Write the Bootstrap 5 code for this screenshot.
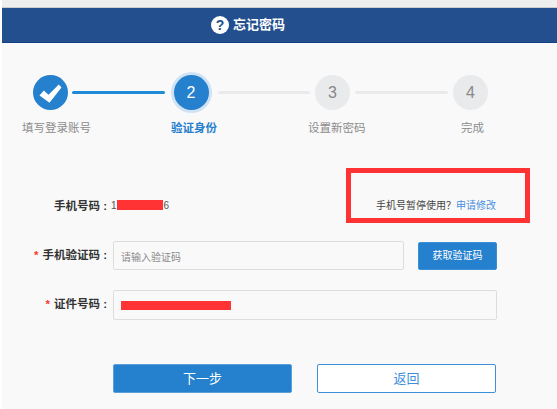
<!DOCTYPE html>
<html lang="zh"><head><meta charset="utf-8"><title>忘记密码</title>
<link href="https://cdn.jsdelivr.net/npm/bootstrap@5.3.0/dist/css/bootstrap.min.css" rel="stylesheet">
<style>
html,body{height:409px;overflow:hidden;background:#fff}
body{font-family:"Liberation Sans","Noto Sans CJK SC",sans-serif;font-size:11px;color:#333}
.pg{margin-left:2px;height:409px;background:#f9f9f9}
.topstrip{height:8px;background:#eeeeee;border-bottom:1px solid #ccc}
.hdr{height:35px;background:#234f8f;border-bottom:1px solid #123f80;color:#fff;font-size:13px;font-weight:700;padding-left:209px;gap:4px}
.qmark{width:18px;height:18px;border-radius:50%;background:#fff;color:#234f8f;font-size:14px;font-weight:700;line-height:18px;text-align:center}
.track{padding:32px 0 0 31px;height:67px}
.node{width:35px;height:35px;border-radius:50%;background:#e9eaec;color:#888;font-size:16px;flex:none}
.node.on{background:#2580cd;color:#fff}
.node.cur{box-shadow:0 0 0 3px #cfe3f5}
.seg{height:3px;width:92.5px;background:#e9eaec;border-radius:2px;flex:none}
.seg.on{background:#1f8ad6}
.g1{margin:0 9px 0 4px}.g2{margin:0 5px 0 9px}.g3{margin:0 5.5px 0 5px}
.lbls{height:20px;margin-top:8px;color:#8c8c8c;font-size:11.5px;line-height:20px}
.l1{margin-left:20px;width:149px}.l2{width:137px;color:#2580cd;font-weight:700}.l3{width:153px}
.frm{padding-top:30px}
.r1{height:55px}
.flbl{width:105px;flex:none;text-align:right;font-weight:700;font-size:11.5px;color:#333}
.flbl i{color:#f33;font-style:normal;margin-right:4px}
.phone{width:344px;flex:none;font-size:10px;color:#555;line-height:14px;padding:31px 0 0}
.phone .flbl{margin-right:4px}
.redact{display:inline-block;background:#f33;flex:none}
.rd1{width:46px;height:10px;margin:1px 1px 0 0}
.rd2{width:110px;height:9px;margin-top:1px}
.flagbox{width:184px;height:55px;border:5px solid #f33;flex:none;font-size:10px;color:#444;text-align:right;padding:26px 29px 0 0;line-height:14px;white-space:nowrap}
.flagbox a{color:#4a8fe0;text-decoration:none}
.r2{margin-top:18px;height:29px}
.r3{margin-top:20px;height:30px}
.inp{height:100%;background:#f9f9f9;border:1px solid #ddd;border-radius:2px;margin-left:6px;padding:0 7px;font-size:10px;color:#8a8a8a;flex:none}
.w1{width:291px;padding-top:3px}.w2{width:384px}
.getc{width:79px;height:28px;margin-left:14px;background:#2580cd;border:1px solid #3a8fd8;color:#fff;font-size:10px;border-radius:2px;padding:0;flex:none}
.acts{margin-top:44px;padding-left:111px;gap:25px}
.bt{width:179px;height:29px;border-radius:2px;font-size:13px;padding:0;flex:none}
.bt1{background:#2580cd;border:1px solid #5a9fdc;color:#fff}
.bt2{background:#fff;border:1px solid #3d8edb;color:#3d8edb}
</style></head><body>
<div class="pg">
<div class="topstrip"></div>
<div class="hdr d-flex align-items-center"><span class="qmark">?</span><span>忘记密码</span></div>
<div class="track d-flex align-items-center">
 <div class="node on d-flex align-items-center justify-content-center"><svg width="23" height="20" viewBox="0 0 23 20"><path d="M0.5 12.5 L4.8 7.5 L9.5 11.8 L19.8 1.5 L22.5 4.5 L10.5 19.8 Z" fill="#fff"/></svg></div>
 <div class="seg on g1"></div>
 <div class="node on cur d-flex align-items-center justify-content-center">2</div>
 <div class="seg g2"></div>
 <div class="node d-flex align-items-center justify-content-center">3</div>
 <div class="seg g3"></div>
 <div class="node d-flex align-items-center justify-content-center">4</div>
</div>
<div class="lbls d-flex"><div class="l1">填写登录账号</div><div class="l2">验证身份</div><div class="l3">设置新密码</div><div>完成</div></div>
<div class="frm">
 <div class="r1 d-flex">
  <div class="phone d-flex align-items-start"><div class="flbl">手机号码 :</div><span>1</span><span class="redact rd1"></span><span>6</span></div>
  <div class="flagbox">手机号暂停使用？<a href="#">申请修改</a></div>
 </div>
 <div class="r2 d-flex align-items-center"><div class="flbl"><i>*</i>手机验证码 :</div><div class="inp w1 d-flex align-items-center">请输入验证码</div><button class="btn getc" type="button">获取验证码</button></div>
 <div class="r3 d-flex align-items-center"><div class="flbl"><i>*</i>证件号码 :</div><div class="inp w2 d-flex align-items-center"><span class="redact rd2"></span></div></div>
 <div class="acts d-flex"><button class="btn bt bt1" type="button">下一步</button><button class="btn bt bt2" type="button">返回</button></div>
</div>
</div>
<script src="https://cdn.jsdelivr.net/npm/bootstrap@5.3.0/dist/js/bootstrap.bundle.min.js"></script>
</body></html>
